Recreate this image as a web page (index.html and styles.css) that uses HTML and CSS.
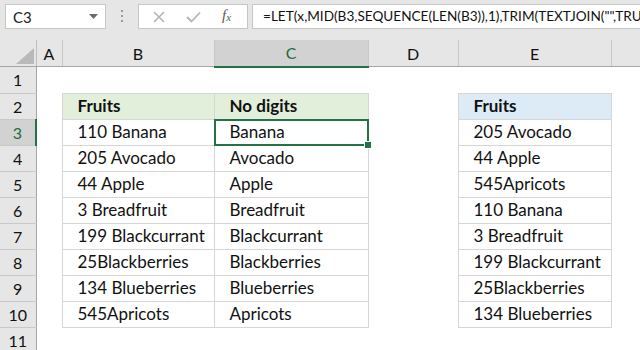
FILE: index.html
```html
<!DOCTYPE html>
<html lang="en">
<head>
    <meta charset="UTF-8">
    <title>LET formula - remove digits</title>
    <link rel="stylesheet" href="styles.css">
</head>
<body>
    <div class="toolbar">
        <div class="namebox">
            <span>C3</span>
            <svg class="chevron" width="9" height="5" viewBox="0 0 9 5"><path d="M0 0H9L4.5 5Z" fill="#6b6b6b"/></svg>
        </div>
        <svg class="dots" width="3" height="13" viewBox="0 0 3 13">
            <rect x="0" y="0" width="2" height="2" fill="#9a9a9a"/>
            <rect x="0" y="5" width="2" height="2" fill="#9a9a9a"/>
            <rect x="0" y="10" width="2" height="2" fill="#9a9a9a"/>
        </svg>
        <div class="fxbox">
            <svg width="12" height="12" viewBox="0 0 12 12"><path d="M1 1L11 11M11 1L1 11" stroke="#b4b4b4" stroke-width="1.6" fill="none"/></svg>
            <svg width="15" height="12" viewBox="0 0 15 12"><path d="M1 6L5.5 10.5L14 1.5" stroke="#b4b4b4" stroke-width="1.8" fill="none"/></svg>
            <span class="fx">f<sub>x</sub></span>
        </div>
        <div class="formula">=LET(x,MID(B3,SEQUENCE(LEN(B3)),1),TRIM(TEXTJOIN("",TRUE,IF(ISNUMBER(-x),"",x))))</div>
    </div>

    <table class="sheet">
        <colgroup>
            <col class="c-rh"><col class="c-a"><col class="c-b"><col class="c-c"><col class="c-d"><col class="c-e"><col>
        </colgroup>
        <thead>
            <tr>
                <th class="corner"><svg width="18" height="16" viewBox="0 0 18 16"><path d="M18 0V16H0Z" fill="#b9b9b9"/></svg></th>
                <th>A</th><th>B</th><th class="hsel">C</th><th>D</th><th>E</th><th></th>
            </tr>
        </thead>
        <tbody>
            <tr><th>1</th><td></td><td></td><td></td><td></td><td></td><td></td></tr>
            <tr><th>2</th><td></td><td class="t hd-green">Fruits</td><td class="t hd-green">No digits</td><td></td><td class="t hd-blue">Fruits</td><td></td></tr>
            <tr><th class="rsel">3</th><td></td><td class="t">110 Banana</td><td class="t sel">Banana</td><td></td><td class="t">205 Avocado</td><td></td></tr>
            <tr><th>4</th><td></td><td class="t">205 Avocado</td><td class="t">Avocado</td><td></td><td class="t">44 Apple</td><td></td></tr>
            <tr><th>5</th><td></td><td class="t">44 Apple</td><td class="t">Apple</td><td></td><td class="t">545Apricots</td><td></td></tr>
            <tr><th>6</th><td></td><td class="t">3 Breadfruit</td><td class="t">Breadfruit</td><td></td><td class="t">110 Banana</td><td></td></tr>
            <tr><th>7</th><td></td><td class="t">199 Blackcurrant</td><td class="t">Blackcurrant</td><td></td><td class="t">3 Breadfruit</td><td></td></tr>
            <tr><th>8</th><td></td><td class="t">25Blackberries</td><td class="t">Blackberries</td><td></td><td class="t">199 Blackcurrant</td><td></td></tr>
            <tr><th>9</th><td></td><td class="t">134 Blueberries</td><td class="t">Blueberries</td><td></td><td class="t">25Blackberries</td><td></td></tr>
            <tr><th>10</th><td></td><td class="t">545Apricots</td><td class="t">Apricots</td><td></td><td class="t">134 Blueberries</td><td></td></tr>
            <tr><th>11</th><td></td><td></td><td></td><td></td><td></td><td></td></tr>
        </tbody>
    </table>
</body>
</html>
```

FILE: styles.css
```css
body {
    margin: 0;
    background: #fff;
    font-family: Lato, "Open Sans", sans-serif;
    overflow: hidden;
}

.toolbar {
    display: flex;
    align-items: center;
    height: 40px;
    padding: 0 0 0 5px;
    background: #e6e6e6;
    box-sizing: border-box;
    white-space: nowrap;
    overflow: hidden;
}

.namebox {
    display: flex;
    align-items: center;
    justify-content: space-between;
    width: 101px;
    height: 25px;
    margin-top: -7px;
    padding: 0 7px 0 7px;
    box-sizing: border-box;
    background: #fff;
    border: 1px solid #c6c6c6;
    font-size: 15px;
    color: #222;
}

.dots {
    margin: -7px 14px 0 15px;
}

.fxbox {
    display: flex;
    align-items: center;
    width: 110px;
    height: 25px;
    margin-top: -7px;
    padding: 0 0 0 14px;
    gap: 21px;
    box-sizing: border-box;
    background: #fff;
    border: 1px solid #c6c6c6;
}

.fx {
    font-family: "Liberation Serif", serif;
    font-style: italic;
    font-size: 15px;
    color: #5a5a5a;
    margin-top: -3px;
}

.fx sub {
    font-size: 11px;
    vertical-align: -1px;
}

.formula {
    flex: 1;
    height: 25px;
    margin: -7px 0 0 4px;
    padding-left: 10px;
    line-height: 23px;
    box-sizing: border-box;
    background: #fff;
    border: 1px solid #c6c6c6;
    border-right: none;
    font-size: 13.6px;
    color: #111;
    overflow: hidden;
}

.sheet {
    border-collapse: collapse;
    table-layout: fixed;
    width: 640px;
    font-size: 17px;
    color: #111;
}

.c-rh { width: 36px; }
.c-a { width: 26px; }
.c-b { width: 152px; }
.c-c { width: 154px; }
.c-d { width: 90px; }
.c-e { width: 153px; }

.sheet thead th {
    height: 24px;
    padding: 0;
    background: #e6e6e6;
    border-left: 1px solid #c8c8c8;
    border-bottom: 1px solid #a6a6a6;
    font-size: 16px;
    font-weight: normal;
    text-align: center;
}

.sheet thead th.corner {
    border-left: none;
    border-right: 1px solid #bdbdbd;
    text-align: right;
    vertical-align: bottom;
    padding: 0 2px 2px 0;
    line-height: 0;
}

.sheet thead th.hsel {
    background: #d2d2d2;
    color: #1f6b40;
    border-bottom: 2px solid #217346;
}

.sheet tbody th {
    height: 25px;
    padding: 0;
    background: #e6e6e6;
    border-right: 1px solid #a6a6a6;
    border-bottom: 1px solid #c8c8c8;
    font-size: 16px;
    font-weight: normal;
    text-align: center;
}

.sheet tbody th.rsel {
    background: #d2d2d2;
    color: #1f6b40;
    border-right: 2px solid #217346;
}

.sheet td {
    padding: 0 0 0 15px;
    height: 25px;
    line-height: 20px;
    white-space: nowrap;
    overflow: hidden;
}

.sheet td.t {
    border: 1px solid #d6d6d6;
}

.hd-green {
    background: #e2efda;
    font-weight: bold;
}

.hd-blue {
    background: #ddebf7;
    font-weight: bold;
}

.sheet td.sel {
    position: relative;
    overflow: visible;
}

.sel::after {
    content: "";
    position: absolute;
    left: -1px;
    top: -1px;
    right: -1px;
    bottom: -1px;
    border: 2px solid #217346;
}

.sel::before {
    content: "";
    position: absolute;
    right: -4px;
    bottom: -4px;
    width: 6px;
    height: 6px;
    background: #217346;
    border: 1px solid #fff;
    z-index: 1;
}
```
